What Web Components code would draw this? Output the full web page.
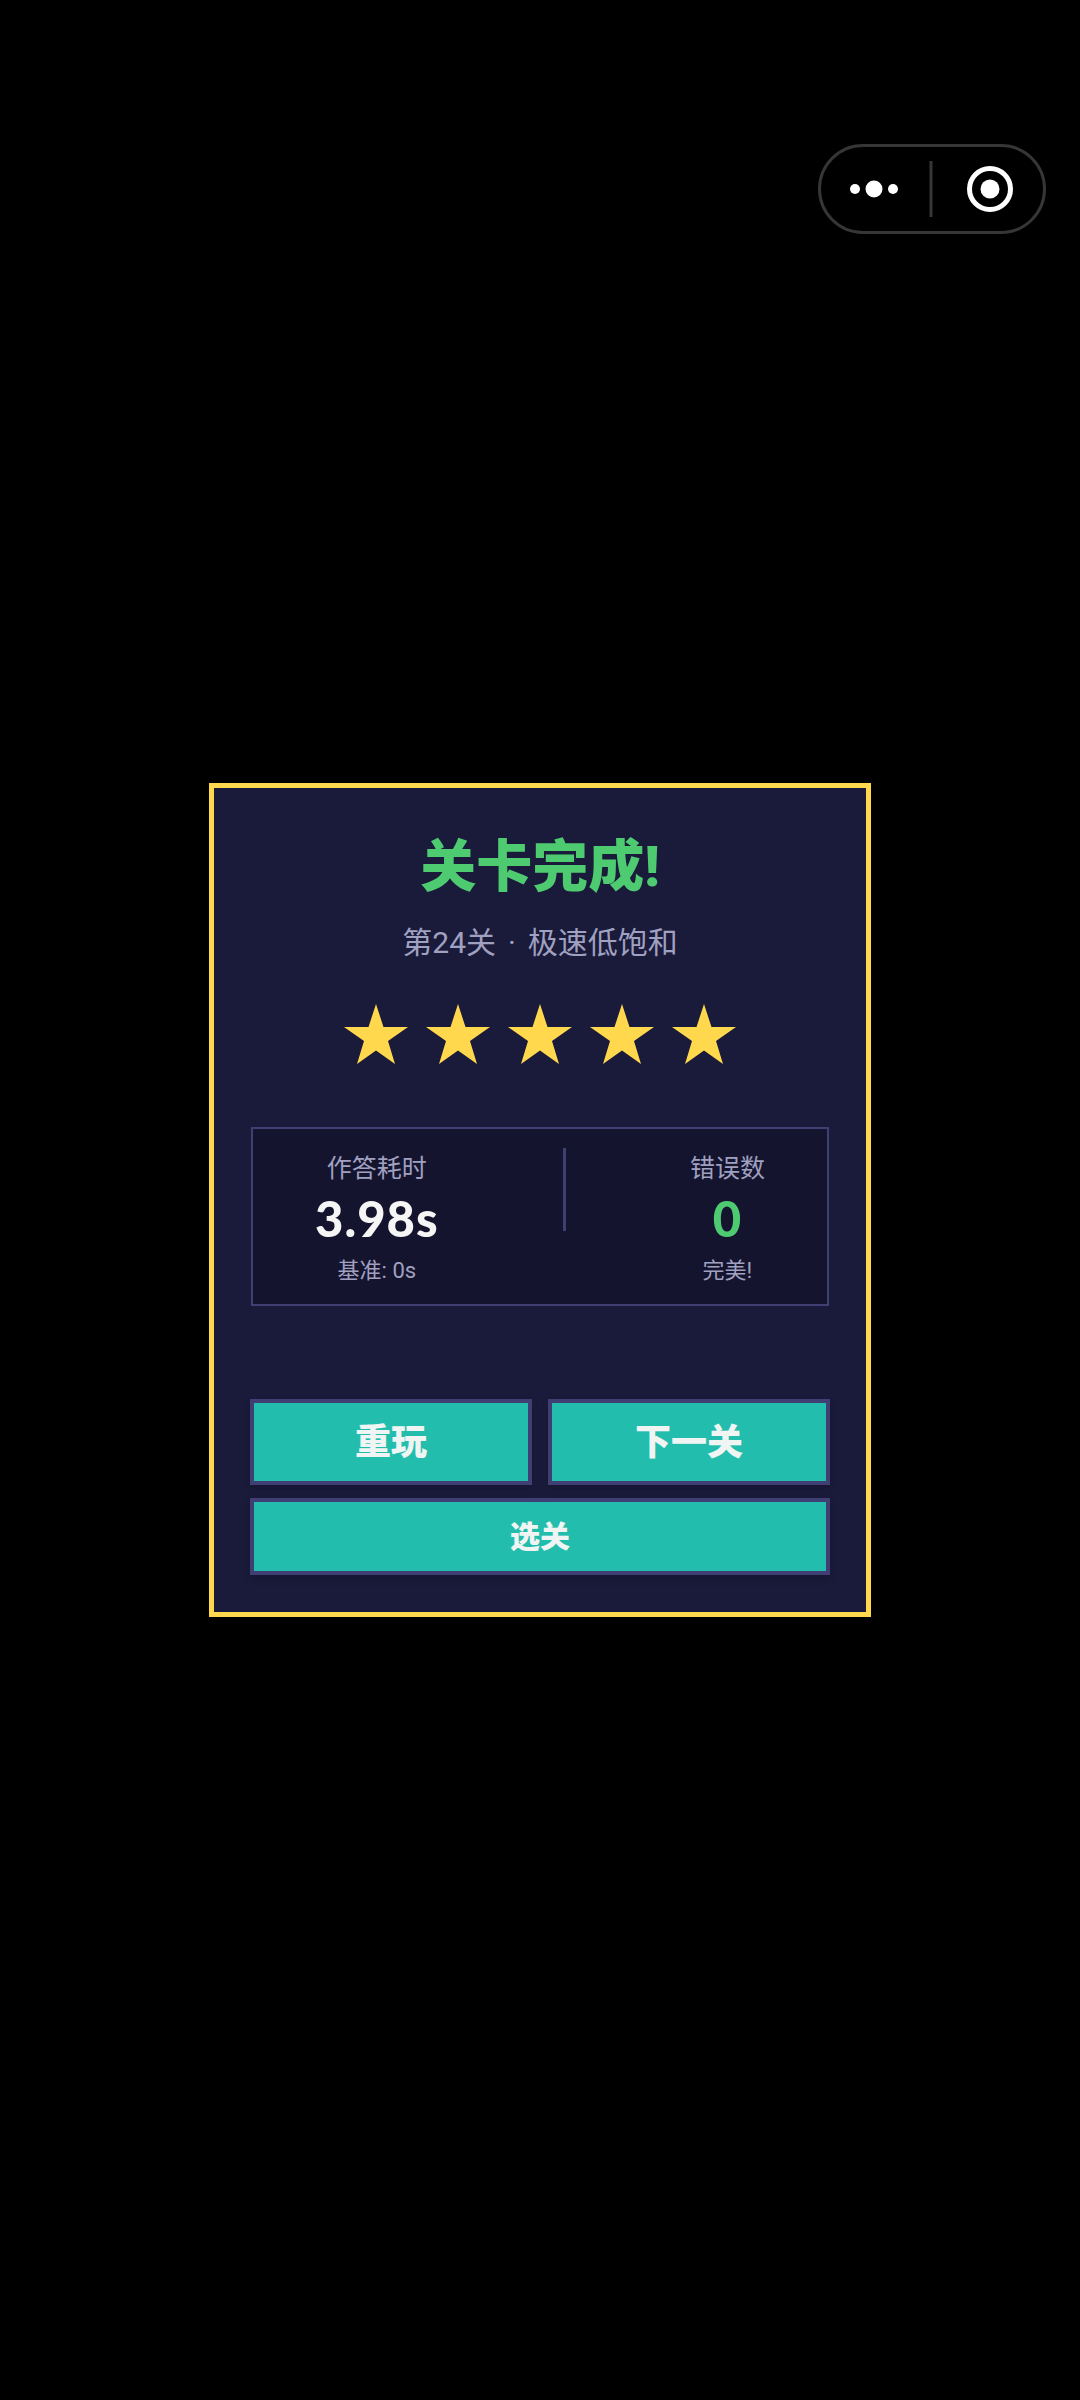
<!DOCTYPE html>
<html lang="zh">
<head>
<meta charset="utf-8">
<title>关卡完成</title>
<style>
  html, body { margin: 0; background: #000; }
  body { font-family: Roboto, "Noto Sans CJK SC", sans-serif; }
</style>
</head>
<body>
<level-screen>
  <level-result title-text="关卡完成!" subtitle="第24关 · 极速低饱和">
    <star-row count="5"></star-row>
    <stat-panel>
      <stat-item slot="left" label="作答耗时" value="3.98s" note="基准: 0s"></stat-item>
      <stat-item slot="right" label="错误数" value="0" note="完美!" tone="good"></stat-item>
    </stat-panel>
    <action-grid>
      <action-button size="large">重玩</action-button>
      <action-button size="large">下一关</action-button>
      <action-button size="small" wide>选关</action-button>
    </action-grid>
  </level-result>
</level-screen>

<script>
class LevelScreen extends HTMLElement {
  connectedCallback() {
    this.attachShadow({ mode: 'open' });
    this.shadowRoot.innerHTML = `
      <style>
        :host {
          display: flex;
          justify-content: center;
          align-items: flex-start;
          box-sizing: border-box;
          position: relative;
          height: 2400px;
          padding-top: 783px;
          background: #000;
        }
        .capsule {
          position: absolute;
          left: 818px;
          top: 144px;
          width: 228px;
          height: 90px;
        }
      </style>
      <svg class="capsule" viewBox="0 0 228 90" aria-hidden="true">
        <rect x="1.5" y="1.5" width="225" height="87" rx="43.5" fill="none" stroke="#363636" stroke-width="3"/>
        <rect x="111.5" y="17" width="3" height="56" fill="#363636"/>
        <circle cx="37" cy="45" r="5" fill="#fff"/>
        <circle cx="56" cy="45" r="8.5" fill="#fff"/>
        <circle cx="75" cy="45" r="5" fill="#fff"/>
        <circle cx="172" cy="45" r="20.5" fill="none" stroke="#fff" stroke-width="5"/>
        <circle cx="172" cy="45" r="9.5" fill="#fff"/>
      </svg>
      <slot></slot>
    `;
  }
}

class LevelResult extends HTMLElement {
  connectedCallback() {
    this.attachShadow({ mode: 'open' });
    this.shadowRoot.innerHTML = `
      <style>
        :host {
          display: block;
          box-sizing: border-box;
          width: 662px;
          height: 834px;
          padding: 44px 36px 0;
          border: 5px solid #ffd84d;
          background: #1a1a3a;
          text-align: center;
        }
        h1 {
          margin: 0;
          font-size: 56px;
          line-height: 70px;
          font-weight: 900;
          color: #4ecb71;
        }
        p {
          margin: 21px 0 0;
          font-size: 30px;
          line-height: 40px;
          word-spacing: 4.5px;
          color: #a0a0c0;
        }
      </style>
      <h1>${this.getAttribute('title-text')}</h1>
      <p>${this.getAttribute('subtitle')}</p>
      <slot></slot>
    `;
  }
}

class StarRow extends HTMLElement {
  connectedCallback() {
    this.attachShadow({ mode: 'open' });
    const star = `<svg viewBox="0 0 64 60" width="64" height="60" aria-hidden="true">
      <polygon points="32,0 39.5,23 64,23 44,37 51,60 32,46.5 13,60 20,37 0,23 24.5,23" fill="#ffd84d"/>
    </svg>`;
    this.shadowRoot.innerHTML = `
      <style>
        :host {
          display: flex;
          justify-content: center;
          gap: 18px;
          margin-top: 41px;
        }
        svg { display: block; }
      </style>
      ${star.repeat(Number(this.getAttribute('count')))}
    `;
  }
}

class StatPanel extends HTMLElement {
  connectedCallback() {
    this.attachShadow({ mode: 'open' });
    this.shadowRoot.innerHTML = `
      <style>
        :host {
          display: flex;
          justify-content: space-around;
          align-items: flex-start;
          box-sizing: border-box;
          height: 179px;
          margin: 63px 1px 0;
          padding-top: 19px;
          border: 2px solid #3f3f74;
          background: #14142e;
        }
        .line {
          width: 3px;
          height: 83px;
          background: #3f3f74;
        }
      </style>
      <slot name="left"></slot>
      <div class="line"></div>
      <slot name="right"></slot>
    `;
  }
}

class StatItem extends HTMLElement {
  connectedCallback() {
    this.attachShadow({ mode: 'open' });
    const good = this.getAttribute('tone') === 'good';
    this.shadowRoot.innerHTML = `
      <style>
        :host {
          display: block;
          padding-top: 4px;
          text-align: center;
        }
        .label { font-size: 25px; line-height: 34px; color: #a0a0c0; }
        .value {
          margin-top: 4px;
          font-family: Lato, sans-serif;
          font-size: 49px;
          line-height: 56px;
          font-weight: 900;
          letter-spacing: 1px;
          color: ${good ? '#4ecb71' : '#f5f5f5'};
        }
        .note { margin-top: 10px; font-size: 22px; line-height: 30px; color: #a0a0c0; }
      </style>
      <div class="label">${this.getAttribute('label')}</div>
      <div class="value">${this.getAttribute('value')}</div>
      <div class="note">${this.getAttribute('note')}</div>
    `;
  }
}

class ActionGrid extends HTMLElement {
  connectedCallback() {
    this.attachShadow({ mode: 'open' });
    this.shadowRoot.innerHTML = `
      <style>
        :host {
          display: grid;
          grid-template-columns: 1fr 1fr;
          column-gap: 16px;
          row-gap: 13px;
          margin-top: 93px;
        }
      </style>
      <slot></slot>
    `;
  }
}

class ActionButton extends HTMLElement {
  connectedCallback() {
    this.attachShadow({ mode: 'open' });
    this.shadowRoot.innerHTML = `
      <style>
        :host {
          display: flex;
          align-items: center;
          justify-content: center;
          box-sizing: border-box;
          padding-bottom: 6px;
          border: 4px solid #3f3f74;
          background: #22bdad;
          color: #f0f5f3;
          font-weight: 900;
          box-shadow: 0 4px 8px rgba(0, 0, 0, .12);
        }
        :host([size="large"]) { height: 86px; font-size: 36px; }
        :host([size="small"]) { height: 77px; font-size: 30px; }
        :host([wide]) { grid-column: 1 / -1; }
      </style>
      <slot></slot>
    `;
  }
}

customElements.define('level-screen', LevelScreen);
customElements.define('level-result', LevelResult);
customElements.define('star-row', StarRow);
customElements.define('stat-panel', StatPanel);
customElements.define('stat-item', StatItem);
customElements.define('action-grid', ActionGrid);
customElements.define('action-button', ActionButton);
</script>
</body>
</html>
